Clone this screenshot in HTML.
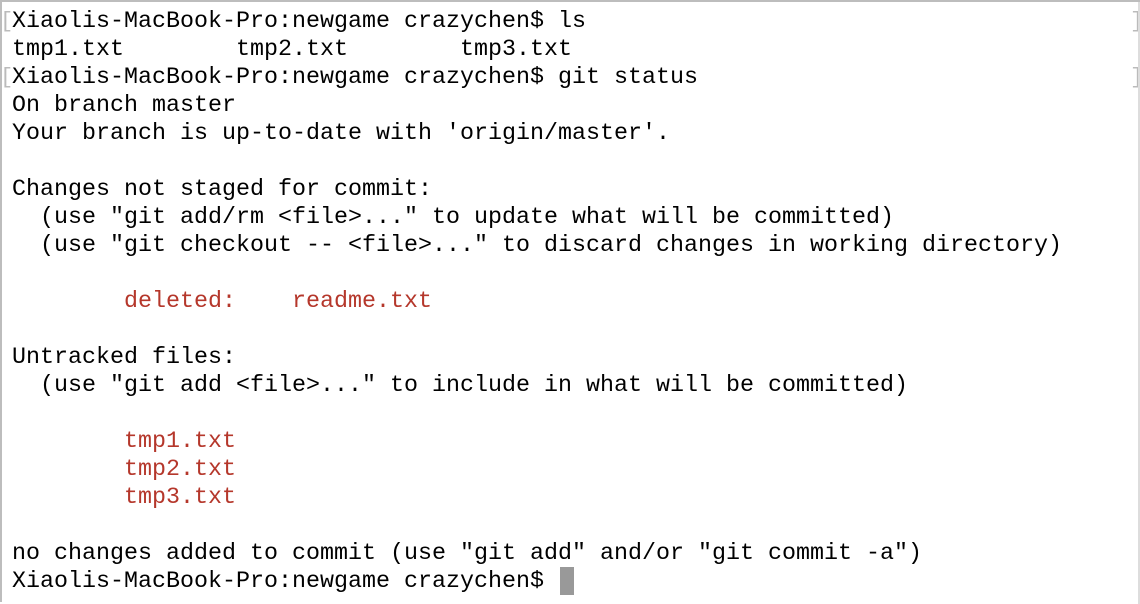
<!DOCTYPE html>
<html><head><meta charset="utf-8"><style>
html,body{margin:0;padding:0}
body{width:1140px;height:602px;background:#fff;position:relative;overflow:hidden;border-top:2px solid #bdbdbd;border-left:2px solid #bdbdbd;box-sizing:border-box}
pre{position:absolute;left:10px;top:6px;margin:0;font-family:"Liberation Mono",monospace;font-size:23.33px;line-height:28px;color:#000;letter-spacing:0}
.r{color:#b5372b}
.br{position:absolute;color:#bbb;font-family:"Liberation Mono",monospace;font-size:22px;line-height:28px}
.cur{position:absolute;left:558px;top:565px;width:14px;height:28px;background:#999}
.edge{position:absolute;right:0;top:0;width:2px;height:602px;background:#ddd}
</style></head><body>
<div class="br" style="left:-2px;top:6px">[</div>
<div class="br" style="left:-2px;top:62px">[</div>
<div class="br" style="left:1128px;top:6px">]</div>
<div class="br" style="left:1128px;top:62px">]</div>
<pre>Xiaolis-MacBook-Pro:newgame crazychen$ ls
tmp1.txt        tmp2.txt        tmp3.txt
Xiaolis-MacBook-Pro:newgame crazychen$ git status
On branch master
Your branch is up-to-date with 'origin/master'.

Changes not staged for commit:
  (use "git add/rm &lt;file&gt;..." to update what will be committed)
  (use "git checkout -- &lt;file&gt;..." to discard changes in working directory)

        <span class="r">deleted:    readme.txt</span>

Untracked files:
  (use "git add &lt;file&gt;..." to include in what will be committed)

        <span class="r">tmp1.txt</span>
        <span class="r">tmp2.txt</span>
        <span class="r">tmp3.txt</span>

no changes added to commit (use "git add" and/or "git commit -a")
Xiaolis-MacBook-Pro:newgame crazychen$ </pre>
<div class="cur"></div>
<div class="edge"></div>
</body></html>
